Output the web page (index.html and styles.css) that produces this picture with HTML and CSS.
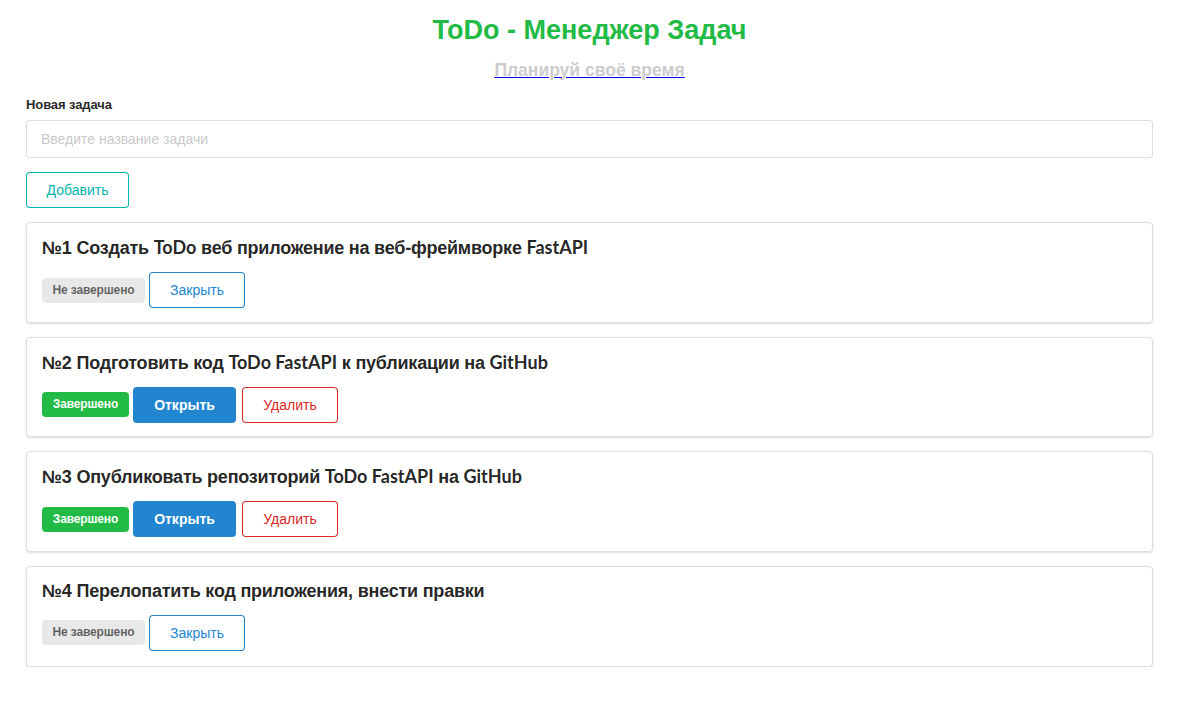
FILE: index.html
```html
<!DOCTYPE html>
<html lang="ru">
<head>
<meta charset="utf-8">
<title>ToDo</title>
<link rel="stylesheet" href="styles.css">
</head>
<body>
<div class="container">
  <h1 class="title">ToDo - Менеджер Задач</h1>
  <div class="subtitle"><a href="#"><span>Планируй своё время</span></a></div>
  <form class="form">
    <label class="field-label">Новая задача</label>
    <input class="input" type="text" placeholder="Введите название задачи">
    <div class="add-row"><button type="button" class="btn basic teal">Добавить</button></div>
  </form>
  <div class="list">
    <div class="card">
      <h3 class="task">№1 Создать <span class="lat">ToDo</span> веб приложение на веб-фреймворке <span class="lat">FastAPI</span></h3>
      <div class="actions">
        <span class="tag grey">Не завершено</span>
        <button type="button" class="btn basic blue">Закрыть</button>
      </div>
    </div>
    <div class="card">
      <h3 class="task">№2 Подготовить код <span class="lat">ToDo FastAPI</span> к публикации на <span class="lat">GitHub</span></h3>
      <div class="actions">
        <span class="tag green">Завершено</span>
        <button type="button" class="btn solid blue">Открыть</button>
        <button type="button" class="btn basic red">Удалить</button>
      </div>
    </div>
    <div class="card">
      <h3 class="task">№3 Опубликовать репозиторий <span class="lat">ToDo FastAPI</span> на <span class="lat">GitHub</span></h3>
      <div class="actions">
        <span class="tag green">Завершено</span>
        <button type="button" class="btn solid blue">Открыть</button>
        <button type="button" class="btn basic red">Удалить</button>
      </div>
    </div>
    <div class="card">
      <h3 class="task">№4 Перелопатить код приложения, внести правки</h3>
      <div class="actions">
        <span class="tag grey">Не завершено</span>
        <button type="button" class="btn basic blue">Закрыть</button>
      </div>
    </div>
  </div>
</div>
</body>
</html>
```
FILE: styles.css
```css
* { box-sizing: border-box; }
html, body { margin: 0; padding: 0; background: #fff; }
body {
  font-family: "Liberation Sans", Arial, sans-serif;
  font-size: 14px;
  line-height: 1.4285em;
  color: rgba(0,0,0,.87);
}
.lat { font-family: Lato, "Liberation Sans", Arial, sans-serif; letter-spacing: 0; }
.container {
  width: 1127px;
  margin-left: 26px;
  padding-top: 14px;
}
.title {
  margin: 0;
  text-align: center;
  font-family: "Liberation Sans", Arial, sans-serif;
  font-weight: bold;
  font-size: 27px;
  line-height: 32px;
  color: #21ba45;
}
.subtitle {
  margin-top: 14px;
  text-align: center;
  font-family: "Liberation Sans", Arial, sans-serif;
  font-weight: bold;
  font-size: 17.5px;
  line-height: 20px;
}
.subtitle a { color: #0000ee; text-decoration: none; }
.subtitle span {
  color: #cccccc;
  text-decoration: underline;
  text-decoration-color: #0000ee;
  text-decoration-thickness: 1px;
}
.form { margin-top: 16px; }
.field-label {
  display: block;
  font-size: 13px;
  font-weight: bold;
  line-height: 18px;
  margin-bottom: 6px;
  color: rgba(0,0,0,.87);
  letter-spacing: -0.1px;
}
.input {
  display: block;
  width: 100%;
  height: 38px;
  padding: 0 14px;
  font-family: "Liberation Sans", Arial, sans-serif;
  font-size: 14px;
  border: 1px solid rgba(34,36,38,.15);
  border-radius: 4px;
  outline: none;
}
.input::placeholder { color: rgba(191,191,191,.87); }
.add-row { margin-top: 14px; }
.btn {
  height: 36px;
  padding: 0;
  border: none;
  border-radius: 4px;
  font-family: "Liberation Sans", Arial, sans-serif;
  font-size: 14px;
  background: #fff;
  cursor: pointer;
}
.basic.teal { color: #00b5ad; box-shadow: inset 0 0 0 1px #00b5ad; width: 103px; }
.basic.blue { color: #2185d0; box-shadow: inset 0 0 0 1px #2185d0; width: 96px; }
.basic.red { color: #db2828; box-shadow: inset 0 0 0 1px #db2828; width: 96px; }
.solid.blue { background: #2185d0; color: #fff; font-weight: bold; width: 103px; margin-right: 6px; }
.list {
  margin-top: 14px;
  display: flex;
  flex-direction: column;
  gap: 14px;
}
.card {
  border: 1px solid rgba(34,36,38,.15);
  border-radius: 4px;
  box-shadow: 0 1px 2px 0 rgba(34,36,38,.15);
  padding: 13px 15px;
  height: 100.67px;
}
.task {
  margin: 0;
  font-size: 18px;
  font-weight: bold;
  line-height: 23px;
  letter-spacing: -0.22px;
}
.actions {
  margin-top: 12px;
  display: flex;
  align-items: center;
}
.tag {
  display: inline-block;
  height: 25px;
  line-height: 25px;
  font-size: 12px;
  font-weight: bold;
  border-radius: 4px;
  margin-right: 4px;
  text-align: center;
  letter-spacing: -0.15px;
}
.tag.grey { background: #e8e8e8; color: rgba(0,0,0,.6); width: 103px; }
.tag.green { background: #21ba45; color: #fff; width: 87px; }
```
